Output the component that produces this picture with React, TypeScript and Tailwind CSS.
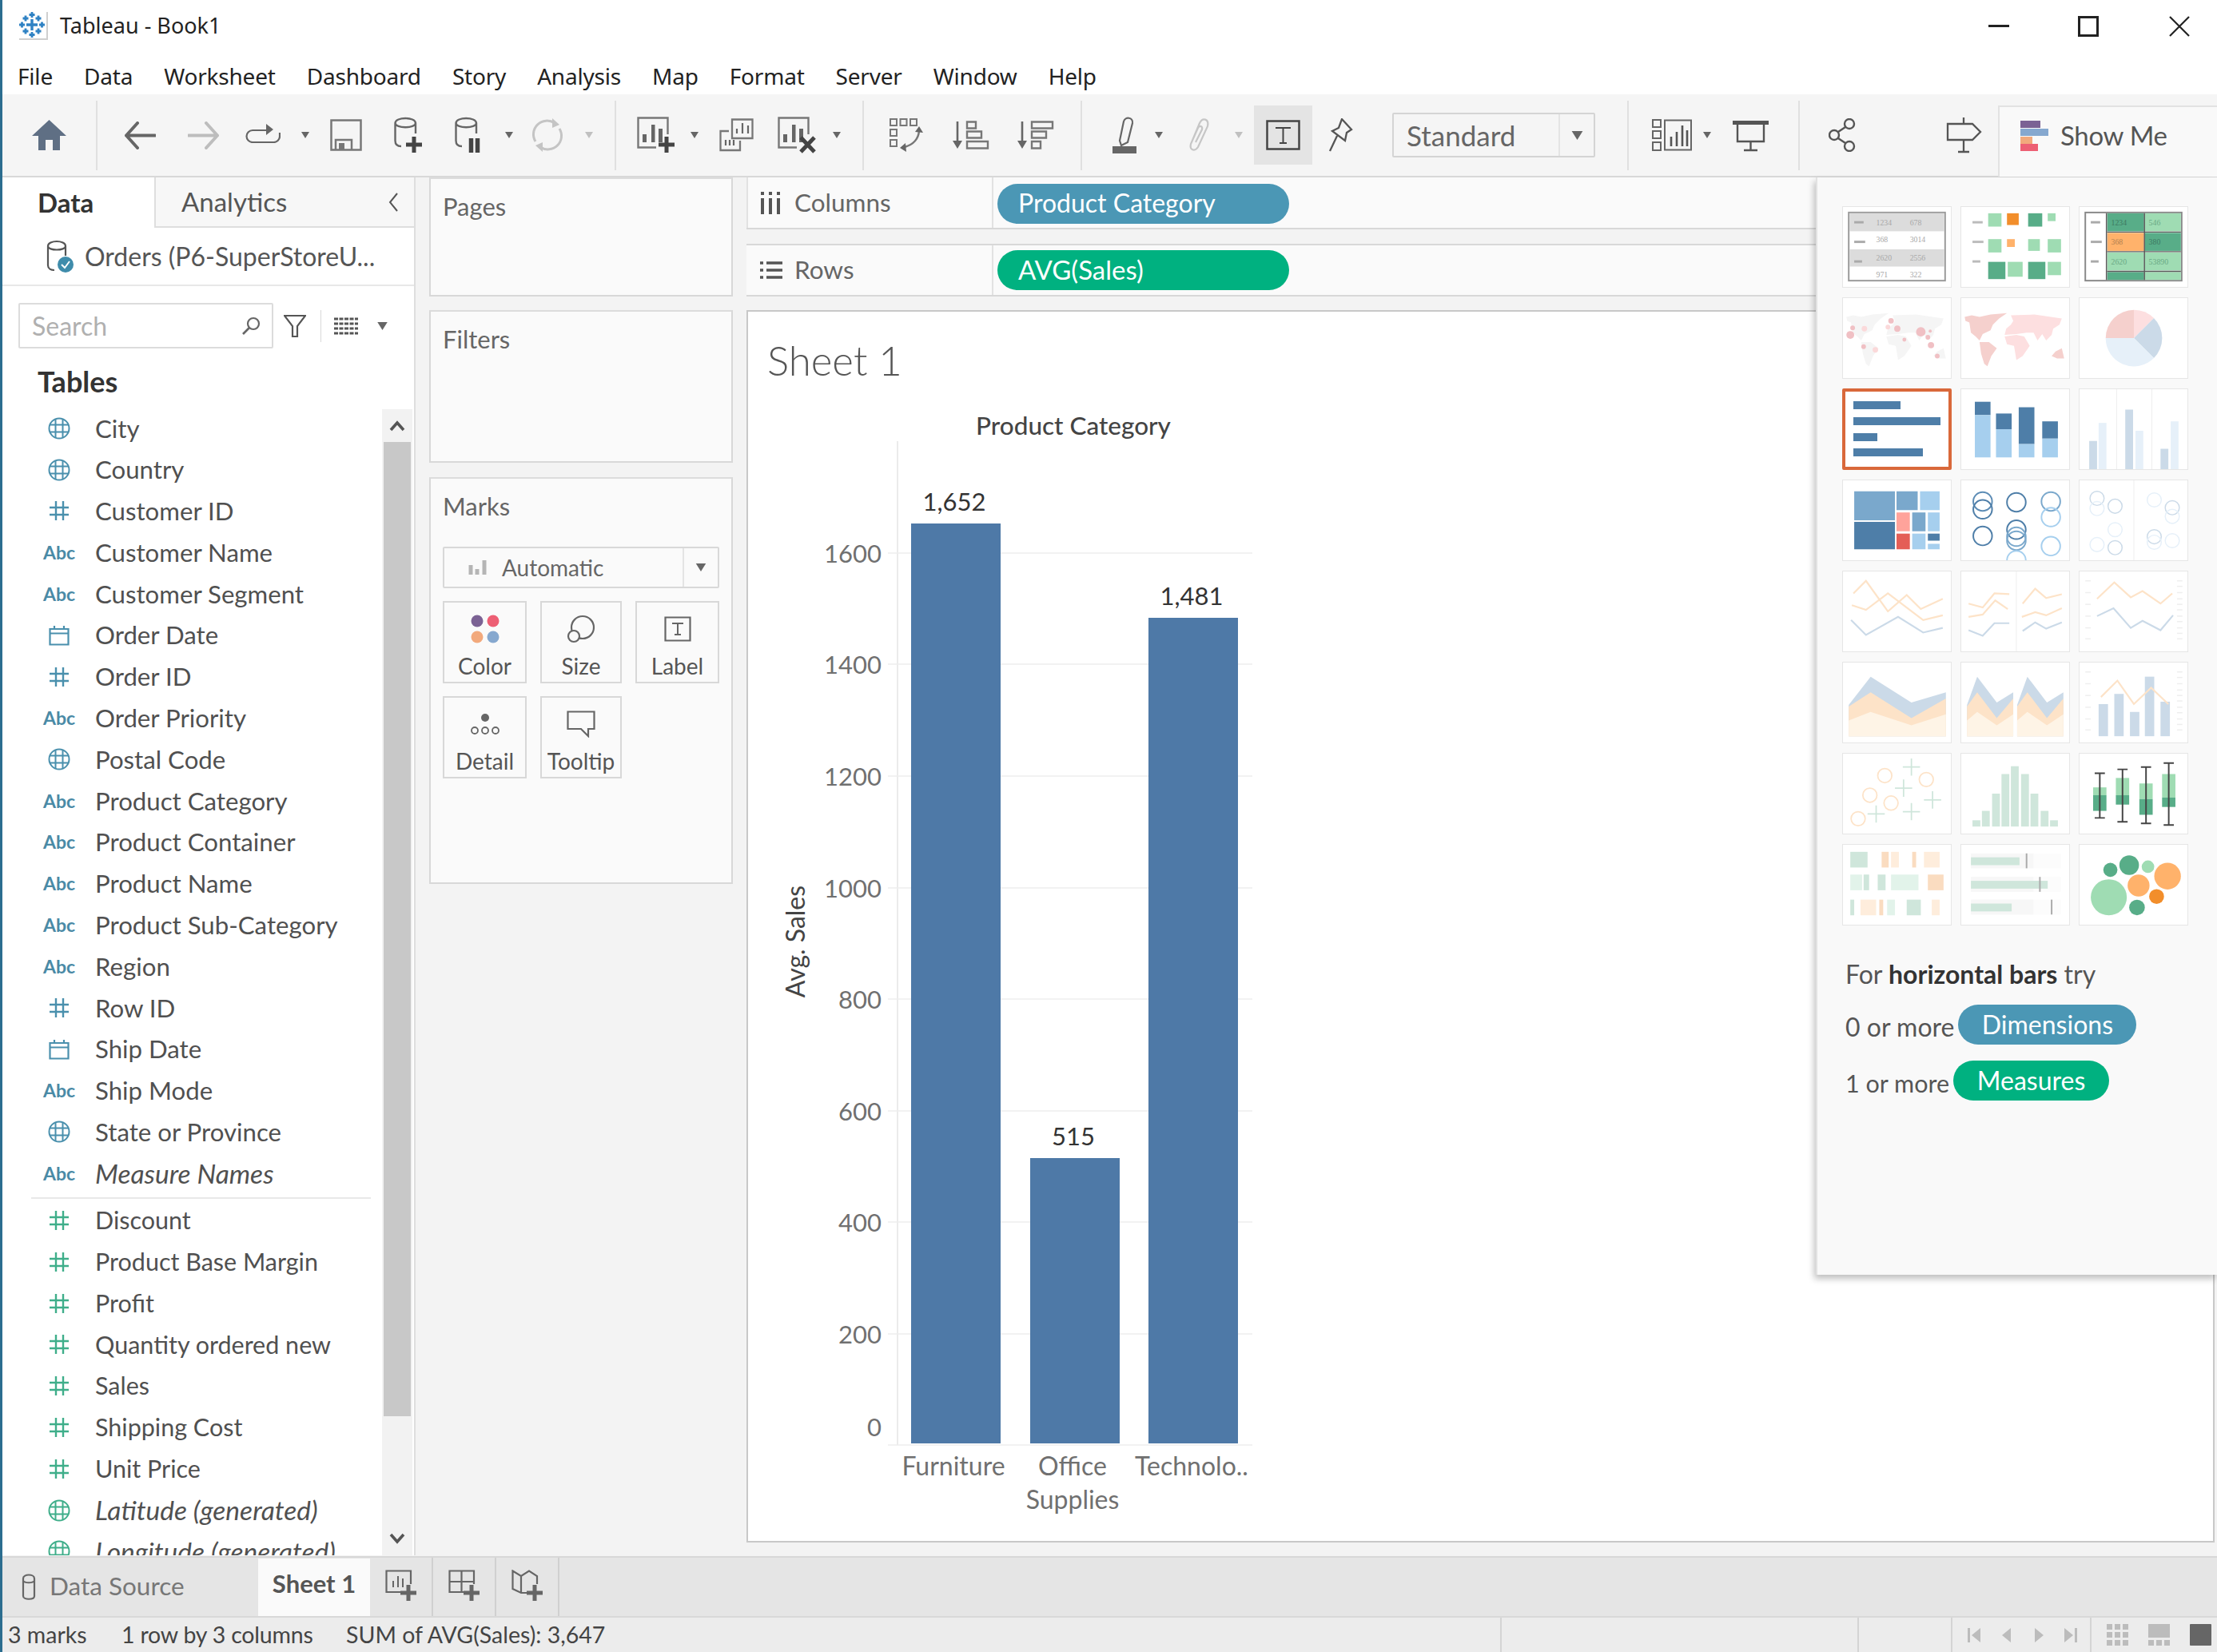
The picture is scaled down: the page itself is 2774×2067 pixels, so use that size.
import type { ReactNode } from "react";

const G = "#666";

type P = { className?: string };

function Caret({ className = "", color = "#666" }: P & { color?: string }) {
  return (
    <svg viewBox="0 0 10 8" className={`w-[12px] h-[8px] shrink-0 ${className}`}>
      <path d="M0 0H10L5 8Z" fill={color} />
    </svg>
  );
}

function Sep({ className = "" }: P) {
  return <div className={`w-[2px] h-[87px] bg-[#e0e0e0] shrink-0 ${className}`} />;
}

function Cylinder({ c = G }: { c?: string }) {
  return (
    <g fill="none" stroke={c} strokeWidth="2.4">
      <path d="M1.5 8C1.5 0 27 0 27 8V21M1.5 8C1.5 15 27 15 27 8M1.5 8V30C1.5 35 5 37 9 37" />
    </g>
  );
}

function Bars({ c = G }: { c?: string }) {
  return (
    <g fill={c}>
      <rect x="7" y="22" width="5" height="10" />
      <rect x="18" y="10" width="4.5" height="22" />
      <rect x="27" y="15" width="5" height="17" />
    </g>
  );
}

function Plus({ x, y, c = "#444" }: { x: number; y: number; c?: string }) {
  return <path d={`M${x - 10} ${y}H${x + 10}M${x} ${y - 10}V${y + 10}`} stroke={c} strokeWidth="5" fill="none" />;
}

function TypeIcon({ type, green }: { type: string; green?: boolean }) {
  const c = green ? "#3fae8a" : "#4a90ad";
  if (type === "abc") {
    return <span className="text-[#4a8aa6] text-[23px] font-bold leading-none">Abc</span>;
  }
  if (type === "hash") {
    return (
      <svg viewBox="0 0 26 26" className="w-[26px] h-[26px]">
        <path d="M9 1V25M18 1V25M1 9H25M1 18H25" stroke={c} strokeWidth="2.4" fill="none" />
      </svg>
    );
  }
  if (type === "date") {
    return (
      <svg viewBox="0 0 26 26" className="w-[26px] h-[26px]">
        <path d="M1.5 5H24.5V24.5H1.5ZM1.5 10.5H24.5M7 1V6M19 1V6" stroke={c} strokeWidth="2.2" fill="none" />
      </svg>
    );
  }
  return (
    <svg viewBox="0 0 28 28" className="w-[28px] h-[28px]">
      <g stroke={c} strokeWidth="2" fill="none">
        <circle cx="14" cy="14" r="12.5" />
        <path d="M9.5 2.5V25.5M18.5 2.5V25.5M2 9.5H26M2 18.5H26" />
      </g>
    </svg>
  );
}

function Field({ name, type, green, italic }: { name: string; type: string; green?: boolean; italic?: boolean }) {
  const size = italic ? "text-[33.5px] italic" : green ? "text-[30.5px]" : "text-[31.2px]";
  return (
    <div className="h-[51.8px] flex items-center shrink-0">
      <div className="w-[90px] ml-[26px] flex justify-center shrink-0">
        <TypeIcon type={type} green={green} />
      </div>
      <span className={`text-[#505050] whitespace-nowrap ${size}`}>{name}</span>
    </div>
  );
}

function MarkCard({ label, children }: { label: string; children: ReactNode }) {
  return (
    <div className="h-[103px] border-2 border-[#d8d8d8] flex flex-col items-center pt-[14px]">
      <div className="h-[38px] flex items-center">{children}</div>
      <span className="text-[28px] leading-[34px] text-[#555] mt-[10px]">{label}</span>
    </div>
  );
}

const Panel = ({ className = "", title, children }: P & { title: string; children?: ReactNode }) => (
  <div className={`border-2 border-[#d8d8d8] border-t-[#dcdcdc] bg-[#fafafa] px-[15px] shrink-0 ${className}`}>
    <div className="text-[31px] text-[#666] leading-[36px] mt-[16px]">{title}</div>
    {children}
  </div>
);

const dim = [
  ["City", "geo"], ["Country", "geo"], ["Customer ID", "hash"], ["Customer Name", "abc"], ["Customer Segment", "abc"],
  ["Order Date", "date"], ["Order ID", "hash"], ["Order Priority", "abc"], ["Postal Code", "geo"], ["Product Category", "abc"],
  ["Product Container", "abc"], ["Product Name", "abc"], ["Product Sub-Category", "abc"], ["Region", "abc"], ["Row ID", "hash"],
  ["Ship Date", "date"], ["Ship Mode", "abc"], ["State or Province", "geo"],
];

const measures = ["Discount", "Product Base Margin", "Profit", "Quantity ordered new", "Sales", "Shipping Cost", "Unit Price"];

const DK = "#58ad88";
const LG = "#9fdcb3";
const OR = "#ffb26b";
const BD = "#4e7ea8";
const BL = "#a6cfee";
const FB = "#cbdae8";
const FL = "#e6f0f9";
const FO = "#fde3c8";

function Ticks() {
  return (
    <g stroke="#eeeeee" strokeWidth="1.5">
      {[12, 27, 42, 57, 72, 86].map((y) => <path key={y} d={`M7 ${y}h7`} />)}
      {[12, 19, 27, 35, 42, 49, 57, 64, 72, 79, 86].map((y) => <path key={y} d={`M124 ${y}h7`} />)}
    </g>
  );
}

function Num({ x, y, t, c = "#a8a8a8" }: { x: number; y: number; t: string; c?: string }) {
  return <text x={x} y={y} fontSize="10" fill={c} fontFamily="Liberation Serif, serif">{t}</text>;
}

function Rect({ r, f }: { r: number[]; f: string }) {
  return <rect x={r[0]} y={r[1]} width={r[2]} height={r[3]} fill={f} />;
}

function MapShape({ a, b }: { a: string; b: string }) {
  return (
    <g>
      <path d="M4 24L13 22L23 24L37 21L58 19L48 26L40 34L37 41L27 46L23 54L18 49L12 44L10 31L5 29Z" fill={a} />
      <path d="M23 56L35 56L45 64L38 74L33 87L29 84L25 71Z" fill={a} />
      <path d="M63 22L93 21L128 26L125 34L117 39L115 47L108 54L103 46L97 54L92 44L83 44L70 46L55 47L57 39L63 34L66 29Z" fill={b} />
      <path d="M55 49L70 47L80 49L87 61L78 74L70 79L67 61L58 59Z" fill={b} />
      <path d="M115 74L120 68L128 64L131 77L122 77Z" fill={a} />
    </g>
  );
}

const thumbs: ReactNode[] = [
  <g key="table">
    <rect x="7" y="7" width="123" height="87" fill="#fff" stroke="#999" strokeWidth="2" />
    <Rect r={[8, 8, 121, 23]} f="#dcdcdc" />
    <Rect r={[8, 54, 121, 22]} f="#dcdcdc" />
    {[[14, 18, 12], [14, 43, 14], [14, 68, 10]].map((d) => <Rect key={d[1]} r={[d[0], d[1], d[2], 3]} f="#aaa" />)}
    <Num x={42} y={23} t="1234" /><Num x={85} y={23} t="678" />
    <Num x={42} y={45} t="368" /><Num x={85} y={45} t="3014" />
    <Num x={42} y={68} t="2620" /><Num x={85} y={68} t="2556" />
    <Num x={42} y={90} t="971" /><Num x={85} y={90} t="322" />
  </g>,
  <g key="hl">
    {[[14, 18, 13], [14, 43, 14], [14, 68, 10]].map((d) => <Rect key={d[1]} r={[d[0], d[1], d[2], 3]} f="#bbb" />)}
    <Rect r={[34, 8, 17, 17]} f={LG} /><Rect r={[58, 8, 15, 15]} f="#f28e2b" /><Rect r={[85, 8, 18, 17]} f={DK} /><Rect r={[110, 8, 10, 10]} f={LG} />
    <Rect r={[34, 41, 17, 17]} f={LG} /><Rect r={[58, 41, 10, 10]} f={OR} /><Rect r={[85, 41, 15, 15]} f={LG} /><Rect r={[110, 41, 17, 17]} f={LG} />
    <Rect r={[34, 70, 22, 22]} f={DK} /><Rect r={[59, 70, 19, 19]} f={LG} /><Rect r={[85, 70, 22, 22]} f={DK} /><Rect r={[110, 70, 17, 17]} f={LG} />
  </g>,
  <g key="heat">
    <rect x="7" y="7" width="123" height="87" fill="#fff" stroke="#888" strokeWidth="2" />
    <Rect r={[35, 8, 47, 23]} f={DK} /><Rect r={[83, 8, 46, 23]} f={LG} />
    <Rect r={[35, 33, 47, 23]} f={OR} /><Rect r={[83, 33, 46, 23]} f={DK} />
    <Rect r={[35, 58, 47, 23]} f={LG} /><Rect r={[83, 58, 46, 23]} f={LG} />
    <Rect r={[35, 83, 47, 10]} f={DK} /><Rect r={[83, 83, 46, 10]} f={LG} />
    <path d="M34 8V93M82.5 8V93M35 32H129M35 57H129M35 82H129" stroke="#5a5a5a" strokeWidth="1.5" />
    {[[14, 18, 12], [14, 43, 14], [14, 68, 10]].map((d) => <Rect key={d[1]} r={[d[0], d[1], d[2], 3]} f="#aaa" />)}
    <Num x={40} y={23} t="1234" c="#3d7a62" /><Num x={88} y={23} t="546" c="#6aa985" />
    <Num x={40} y={48} t="368" c="#b08050" /><Num x={88} y={48} t="380" c="#3d7a62" />
    <Num x={40} y={73} t="2620" c="#6aa985" /><Num x={88} y={73} t="53890" c="#6aa985" />
  </g>,
  <g key="sym">
    <MapShape a="#f5f5f5" b="#f5f5f5" />
    {[[9, 47, 5, "#f0c0c4"], [12, 38, 3, "#f0c0c4"], [27, 39, 3.5, "#fbd9da"], [61, 29, 3.5, "#f0c0c4"], [69, 39, 4, "#f0c0c4"], [57, 37, 3, "#fbd9da"], [99, 43, 6, "#f0c0c4"], [111, 42, 2, "#f0c0c4"], [108, 50, 3, "#f0c0c4"], [78, 53, 2.5, "#f0c0c4"], [112, 60, 4, "#f0c0c4"], [26, 62, 3, "#f0c0c4"], [41, 66, 3.5, "#fbd9da"], [120, 74, 3, "#f0c0c4"]].map((d, i) => (
      <circle key={i} cx={d[0] as number} cy={d[1] as number} r={d[2] as number} fill={d[3] as string} />
    ))}
  </g>,
  <g key="fill"><MapShape a="#f5d0cd" b="#fddfe0" /></g>,
  <g key="pie">
    <path d="M69 51L33 51A36 36 0 0 1 69 15Z" fill="#f5d0cd" />
    <path d="M69 51L69 15A36 36 0 0 1 94.5 25.5Z" fill="#fddfe0" />
    <path d="M69 51L94.5 25.5A36 36 0 0 1 94.5 76.5Z" fill={FB} />
    <path d="M69 51L94.5 76.5A36 36 0 0 1 33 51Z" fill={FL} />
  </g>,
  <g key="hbar">
    <Rect r={[14, 16, 59, 10]} f={BD} /><Rect r={[14, 36, 109, 10]} f={BD} /><Rect r={[14, 56, 30, 10]} f={BD} /><Rect r={[14, 75, 87, 10]} f={BD} />
  </g>,
  <g key="stack">
    <Rect r={[17, 16, 20, 17]} f={BD} /><Rect r={[17, 33, 20, 54]} f={BL} />
    <Rect r={[44, 31, 20, 20]} f={BD} /><Rect r={[44, 51, 20, 36]} f={BL} />
    <Rect r={[73, 23, 20, 47]} f={BD} /><Rect r={[73, 70, 20, 17]} f={BL} />
    <Rect r={[103, 41, 20, 22]} f={BD} /><Rect r={[103, 63, 20, 24]} f={BL} />
  </g>,
  <g key="side">
    <path d="M47 0V102M92 0V102" stroke="#eee" strokeWidth="1" />
    <Rect r={[12, 66, 10, 36]} f={FB} /><Rect r={[24, 43, 10, 59]} f={FL} />
    <Rect r={[58, 26, 10, 76]} f={FB} /><Rect r={[71, 53, 10, 49]} f={FL} />
    <Rect r={[103, 76, 10, 26]} f={FB} /><Rect r={[116, 41, 10, 61]} f={FL} />
  </g>,
  <g key="tree">
    <Rect r={[14, 14, 52, 37]} f="#7aa8cc" /><Rect r={[68, 14, 27, 24]} f="#7aa8cc" /><Rect r={[98, 14, 25, 24]} f={BL} />
    <Rect r={[14, 53, 52, 35]} f={BD} /><Rect r={[68, 41, 17, 24]} f="#ffa39b" /><Rect r={[88, 41, 17, 24]} f="#7aa8cc" />
    <Rect r={[108, 41, 15, 24]} f={BL} /><Rect r={[68, 68, 17, 20]} f="#e45e56" /><Rect r={[88, 68, 17, 20]} f={BL} />
    <Rect r={[108, 68, 15, 9]} f={BD} /><Rect r={[108, 81, 15, 7]} f={BL} />
  </g>,
  <g key="circ" fill="none" strokeWidth="2">
    {[[27, 27, "#5c8cb5"], [27, 37, BD], [70, 28, BD], [27, 71, BD], [70, 63, BD], [70, 72, "#7aa8cc"], [70, 77, "#7aa8cc"], [114, 27, "#7aa8cc"], [114, 47, BL], [114, 84, BL], [70, 102, BL]].map((d, i) => (
      <circle key={i} cx={d[0] as number} cy={d[1] as number} r="12" stroke={d[2] as string} />
    ))}
  </g>,
  <g key="circ2" fill="none" strokeWidth="1.5">
    <path d="M69 0V102" stroke="#eee" strokeWidth="1" />
    {[[22, 23, FB], [22, 36, FL], [45, 33, FB], [45, 63, FL], [22, 82, FL], [45, 86, FB], [95, 25, FL], [118, 35, FB], [118, 46, FL], [95, 72, FB], [95, 79, FL], [118, 77, FL]].map((d, i) => (
      <circle key={i} cx={d[0] as number} cy={d[1] as number} r="9" stroke={d[2] as string} />
    ))}
  </g>,
  <g key="line" fill="none" strokeWidth="2.2">
    <path d="M13 28L29 12L57 51L81 30L99 48L127 35" stroke={FO} />
    <path d="M11 43L29 49L57 28L102 62L127 56" stroke={FO} />
    <path d="M10 62L29 81L70 58L102 78L127 72" stroke={FB} />
  </g>,
  <g key="line2" fill="none" strokeWidth="2.2">
    <path d="M70 0V102" stroke="#eee" strokeWidth="1" />
    <path d="M9 41L27 46L42 28L61 29" stroke={FO} />
    <path d="M9 58L27 55L43 37L59 48" stroke={FO} />
    <path d="M9 75L27 82L42 66L61 66" stroke={FB} />
    <path d="M78 41L94 22L108 34L128 29" stroke={FO} />
    <path d="M77 58L94 52L108 56L128 47" stroke={FO} />
    <path d="M78 76L94 65L108 73L128 65" stroke={FB} />
  </g>,
  <g key="line3">
    <Ticks />
    <g fill="none" strokeWidth="2.2">
      <path d="M22 35L44 14L65 33L80 25L103 41L118 28" stroke={FO} />
      <path d="M22 57L43 47L65 72L80 63L103 75L119 56" stroke={FB} />
    </g>
  </g>,
  <g key="area">
    <path d="M7 54L35 18L87 51L131 38V94H7Z" fill={FB} />
    <path d="M7 56L35 38L87 71L131 46V94H7Z" fill={FO} />
    <path d="M7 74L35 63L87 80L131 66V94H7Z" fill="#fef4e6" />
  </g>,
  <g key="area2">
    {[0, 64].map((dx) => (
      <g key={dx} transform={`translate(${dx} 0)`}>
        <path d="M7 54L20 18L45 51L66 38V94H7Z" fill={FB} />
        <path d="M7 56L20 38L45 71L66 46V94H7Z" fill={FO} />
        <path d="M7 74L20 63L45 80L66 66V94H7Z" fill="#fef4e6" />
      </g>
    ))}
  </g>,
  <g key="dual">
    <Ticks />
    <Rect r={[24, 53, 12, 41]} f={FB} /><Rect r={[44, 40, 12, 54]} f={FB} /><Rect r={[64, 63, 12, 31]} f={FB} />
    <Rect r={[83, 18, 12, 76]} f={FB} /><Rect r={[103, 50, 12, 44]} f={FB} />
    <path d="M27 44L48 23L69 53L91 32L113 53" fill="none" stroke={FO} strokeWidth="2.2" />
  </g>,
  <g key="scatter" fill="none" strokeWidth="1.8">
    {[[53, 28], [106, 33], [34, 53], [61, 63], [19, 83]].map((d) => <circle key={d[0]} cx={d[0]} cy={d[1]} r="9" stroke={FO} />)}
    {[[87, 17], [77, 44], [114, 59], [42, 77], [87, 74]].map((d) => <path key={d[0]} d={`M${d[0] - 11} ${d[1]}h22M${d[0]} ${d[1] - 11}v22`} stroke="#cfe6db" />)}
  </g>,
  <g key="hist" fill="#cfe6db">
    {[[14, 85], [26, 73], [39, 51], [51, 26], [63, 16], [76, 26], [88, 51], [101, 73], [113, 85]].map((d) => (
      <rect key={d[0]} x={d[0]} y={d[1]} width="10" height={93 - d[1]} />
    ))}
  </g>,
  <g key="box">
    {[[17, 43, 53, 73, 25, 82], [46, 31, 53, 65, 20, 87], [76, 38, 58, 78, 17, 89], [105, 26, 56, 68, 12, 91]].map((b) => (
      <g key={b[0]}>
        <Rect r={[b[0], b[1], 17, b[2] - b[1]]} f={LG} />
        <Rect r={[b[0], b[2], 17, b[3] - b[2]]} f={DK} />
        <path d={`M${b[0] + 2} ${b[4]}h13M${b[0] + 2} ${b[5]}h13M${b[0] + 8.5} ${b[4]}V${b[5]}`} stroke="#444" strokeWidth="2" fill="none" />
      </g>
    ))}
  </g>,
  <g key="gantt">
    <Rect r={[9, 9, 22, 20]} f="#cfe6db" /><Rect r={[49, 9, 9, 20]} f="#fadcc0" /><Rect r={[61, 9, 10, 20]} f="#feeddc" /><Rect r={[88, 9, 5, 20]} f="#fadcc0" /><Rect r={[103, 9, 20, 20]} f="#feeddc" />
    <Rect r={[9, 38, 15, 20]} f="#e2f3ea" /><Rect r={[26, 38, 7, 20]} f="#cfe6db" /><Rect r={[44, 38, 10, 20]} f="#cfe6db" /><Rect r={[61, 38, 35, 20]} f="#e2f3ea" /><Rect r={[108, 38, 20, 20]} f="#fadcc0" />
    <Rect r={[9, 70, 5, 20]} f="#cfe6db" /><Rect r={[22, 70, 20, 20]} f="#feeddc" /><Rect r={[46, 70, 5, 20]} f="#fadcc0" /><Rect r={[56, 70, 10, 20]} f="#e2f3ea" /><Rect r={[81, 70, 18, 20]} f="#cfe6db" /><Rect r={[113, 70, 10, 20]} f="#feeddc" />
  </g>,
  <g key="bullet">
    {[[11, 62, 82], [41, 98, 99], [70, 52, 114]].map((b) => (
      <g key={b[0]}>
        <Rect r={[12, b[0], 115, 19]} f="#fcfcfc" />
        <Rect r={[12, b[0], 80, 19]} f="#f7f7f7" />
        <Rect r={[12, b[0] + 5, b[1], 10]} f="#cfe6db" />
        <Rect r={[b[2], b[0], 2, 19]} f="#aaa" />
      </g>
    ))}
  </g>,
  <g key="bubble">
    <circle cx="37" cy="67" r="23" fill={LG} />
    <circle cx="39" cy="32" r="9" fill={DK} />
    <circle cx="63" cy="26" r="12.5" fill={DK} />
    <circle cx="87" cy="28" r="8" fill={LG} />
    <circle cx="112" cy="40" r="17" fill={OR} />
    <circle cx="75" cy="52" r="14" fill={OR} />
    <circle cx="98" cy="66" r="9.5" fill="#f28e2b" />
    <circle cx="73" cy="80" r="10" fill={DK} />
  </g>,
];

function Chart() {
  const ticks = [[1600, 692], [1400, 831], [1200, 971], [1000, 1111], [800, 1250], [600, 1390], [400, 1529], [200, 1669], [0, 1808]];
  const bars = [[1139, 655, "1,652"], [1288, 1449, "515"], [1436, 773, "1,481"]] as const;
  return (
    <svg viewBox="940 500 700 1400" className="w-[700px] h-[1400px] ml-[5px]" fontFamily="Lato, sans-serif">
      <path d="M1122 552V1808" stroke="#e4e4e4" strokeWidth="1.5" />
      {ticks.map(([v, y]) => <path key={v} d={`M1110 ${y}H1566`} stroke="#eeeeee" strokeWidth="1.5" />)}
      {ticks.map(([v, y]) => (
        <text key={v} x={1102} y={(v === 0 ? 1785 : y) + 12} textAnchor="end" fontSize="31" fill="#707070">{v}</text>
      ))}
      <text x={1342} y={544} textAnchor="middle" fontSize="31.5" fill="#444" fontWeight="500">Product Category</text>
      <text transform="translate(1006 1178) rotate(-90)" textAnchor="middle" fontSize="32" fill="#444">Avg. Sales</text>
      {bars.map(([x, y, t]) => (
        <g key={t}>
          <rect x={x} y={y} width={112} height={1806 - y} fill="#4e79a7" />
          <text x={x + 54} y={y - 16} textAnchor="middle" fontSize="31" fill="#333">{t}</text>
        </g>
      ))}
      <text x={1192} y={1846} textAnchor="middle" fontSize="32" fill="#707070">Furniture</text>
      <text x={1341} y={1846} textAnchor="middle" fontSize="32" fill="#707070">Office</text>
      <text x={1341} y={1888} textAnchor="middle" fontSize="32" fill="#707070">Supplies</text>
      <text x={1490} y={1846} textAnchor="middle" fontSize="32" fill="#707070">Technolo..</text>
    </svg>
  );
}

function Toolbar() {
  return (
    <div className="h-[102px] bg-[#f5f5f5] flex items-center shrink-0 relative">
      <svg viewBox="0 0 43 38" className="w-[43px] h-[38px] ml-[37px] shrink-0">
        <path d="M21.5 0L43 20H35V38H26V25H17V38H8V20H0Z" fill="#5f6f84" />
      </svg>
      <Sep className="ml-[37px]" />
      <svg viewBox="0 0 40 35" className="w-[40px] h-[35px] ml-[33px] shrink-0">
        <path d="M17 2L3 17.5L17 33M3 17.5H39" stroke="#666" strokeWidth="4" strokeLinecap="round" strokeLinejoin="round" fill="none" />
      </svg>
      <svg viewBox="0 0 40 35" className="w-[40px] h-[35px] ml-[40px] shrink-0">
        <path d="M23 2L37 17.5L23 33M37 17.5H1" stroke="#bdbdbd" strokeWidth="4" strokeLinecap="round" strokeLinejoin="round" fill="none" />
      </svg>
      <svg viewBox="0 0 44 24" className="w-[44px] h-[24px] ml-[32px] shrink-0 mb-[4px]">
        <path d="M27 8H9A7.5 7.5 0 0 0 9 23H35A7.5 7.5 0 0 0 43 15V11" stroke="#666" strokeWidth="2.2" fill="none" />
        <path d="M26 0L35 7L26 14Z" fill="#666" />
      </svg>
      <Caret className="ml-[25px]" />
      <svg viewBox="0 0 40 40" className="w-[40px] h-[40px] ml-[25px] shrink-0">
        <path d="M1.5 1.5H38.5V38.5H1.5ZM7 38V26H27V38" stroke="#777" strokeWidth="2.5" fill="none" />
        <rect x="11" y="30" width="7" height="8" fill="#777" />
      </svg>
      <svg viewBox="0 0 36 46" className="w-[36px] h-[46px] ml-[40px] shrink-0">
        <Cylinder /><Plus x={25} y={35} />
      </svg>
      <svg viewBox="0 0 32 46" className="w-[32px] h-[46px] ml-[40px] shrink-0">
        <Cylinder /><path d="M20.5 27V45M28.5 27V45" stroke="#444" strokeWidth="5.5" />
      </svg>
      <Caret className="ml-[30px]" />
      <svg viewBox="0 0 42 44" className="w-[42px] h-[44px] ml-[21px] shrink-0">
        <path d="M6 30A17 17 0 0 1 30 7M36 14A17 17 0 0 1 12 37" stroke="#c4c4c4" strokeWidth="3" fill="none" />
        <path d="M27 1L36 9L27 13ZM15 43L6 35L15 31Z" fill="#c4c4c4" />
      </svg>
      <Caret color="#c0c0c0" className="ml-[25px]" />
      <Sep className="ml-[26px]" />
      <svg viewBox="0 0 48 46" className="w-[48px] h-[46px] ml-[26px] shrink-0">
        <path d="M24 38.5H1.5V1.5H38.5V22" stroke="#777" strokeWidth="2.4" fill="none" />
        <Bars /><Plus x={37} y={35} />
      </svg>
      <Caret className="ml-[18px]" />
      <svg viewBox="0 0 43 42" className="w-[43px] h-[42px] ml-[25px] shrink-0">
        <path d="M16 1.5H41.5V25H16ZM12 16H1.5V40H26V28" stroke="#777" strokeWidth="2.3" fill="none" />
        <path d="M22 19V13M29 19V6M36 19V9M8 34V27M13 34V27M18 34V27" stroke="#666" strokeWidth="2.2" />
      </svg>
      <svg viewBox="0 0 48 46" className="w-[48px] h-[46px] ml-[30px] shrink-0">
        <path d="M24 38.5H1.5V1.5H38.5V22" stroke="#777" strokeWidth="2.4" fill="none" />
        <Bars />
        <path d="M29 26L46 44M46 26L29 44" stroke="#444" strokeWidth="5" />
      </svg>
      <Caret className="ml-[20px]" />
      <Sep className="ml-[26px]" />
      <svg viewBox="0 0 43 42" className="w-[43px] h-[42px] ml-[32px] shrink-0">
        <g fill="none" stroke="#777" strokeWidth="2">
          <path d="M1 1h8v8h-8zM13.5 1h8v8h-8zM26 1h8v8h-8zM1 14h8v8h-8zM1 27h8v8h-8z" />
          <path d="M37 16C36 27 29 33 19 36" strokeWidth="2.5" />
        </g>
        <path d="M32 17L37 10L42 18ZM20 31L13 37L21 42Z" fill="#666" />
      </svg>
      <svg viewBox="0 0 46 36" className="w-[46px] h-[36px] ml-[36px] shrink-0">
        <path d="M6 1V27" stroke="#666" strokeWidth="2.6" /><path d="M0 25H12L6 35Z" fill="#666" />
        <path d="M18 1.5h11v8h-11zM18 13.5h18v8h-18zM18 26h26v8.5h-26z" fill="none" stroke="#777" strokeWidth="2.4" />
      </svg>
      <svg viewBox="0 0 46 36" className="w-[46px] h-[36px] ml-[35px] shrink-0">
        <path d="M6 1V27" stroke="#666" strokeWidth="2.6" /><path d="M0 25H12L6 35Z" fill="#666" />
        <path d="M18 1.5h26v8h-26zM18 13.5h18v8h-18zM18 26h11v8.5h-11z" fill="none" stroke="#777" strokeWidth="2.4" />
      </svg>
      <Sep className="ml-[33px]" />
      <svg viewBox="0 0 31 46" className="w-[31px] h-[46px] ml-[38px] shrink-0">
        <path d="M9 30L14 6C16 -1 26 1 25 8L19 32L11 36Z" stroke="#666" strokeWidth="2.2" fill="none" />
        <path d="M0 37H30V46H0ZM6 37L10 33" fill="#666" />
      </svg>
      <Caret className="ml-[21px]" />
      <svg viewBox="0 0 29 46" className="w-[29px] h-[46px] ml-[29px] shrink-0">
        <path d="M6 32L16 8C20 0 28 3 26 12L14 38C10 44 3 42 5 34L14 14C16 10 20 12 19 16L11 32" stroke="#c6c6c6" strokeWidth="2.2" fill="none" />
      </svg>
      <Caret color="#c0c0c0" className="ml-[30px]" />
      <div className="w-[73px] h-[74px] bg-[#e4e4e4] ml-[13px] flex items-center justify-center shrink-0">
        <svg viewBox="0 0 43 38" className="w-[43px] h-[38px]">
          <path d="M1.5 1.5H41.5V36.5H1.5Z" stroke="#444" strokeWidth="2.5" fill="none" />
          <path d="M12 10H31M21.5 10V29M17 29H26" stroke="#444" strokeWidth="2" fill="none" />
        </svg>
      </div>
      <svg viewBox="0 0 32 42" className="w-[32px] h-[42px] ml-[19px] shrink-0">
        <path d="M18 1L30 14L24 18L22 28L6 16L14 12Z M12 22L3 41" stroke="#555" strokeWidth="2.3" fill="none" />
      </svg>
      <div className="w-[254px] h-[56px] ml-[49px] border-2 border-[#d4d4d4] rounded-[2px] flex items-center shrink-0">
        <span className="text-[35px] text-[#666] ml-[16px] w-[190px]">Standard</span>
        <div className="border-l-2 border-[#e4e4e4] flex-1 h-full flex items-center justify-center">
          <Caret className="w-[15px] h-[11px]" />
        </div>
      </div>
      <Sep className="ml-[40px]" />
      <svg viewBox="0 0 50 40" className="w-[50px] h-[40px] ml-[29px] shrink-0">
        <path d="M1 1h10v9h-10zM1 15h10v9h-10zM1 29h10v10h-10z" stroke="#666" strokeWidth="2" fill="none" />
        <path d="M16 1.5H49V38.5H16Z" stroke="#666" strokeWidth="2" fill="none" />
        <path d="M24 34V22M31 34V16M38 34V8M44 34V14" stroke="#555" strokeWidth="2.6" />
      </svg>
      <Caret className="ml-[13px]" />
      <svg viewBox="0 0 45 42" className="w-[45px] h-[42px] ml-[26px] shrink-0">
        <path d="M6 6H39V29H6ZM22.5 29V40M14 40H31" stroke="#555" strokeWidth="2.4" fill="none" />
        <path d="M0 3H45V8H0Z" fill="#555" />
      </svg>
      <Sep className="ml-[37px]" />
      <svg viewBox="0 0 35 42" className="w-[35px] h-[42px] ml-[36px] shrink-0">
        <g stroke="#555" strokeWidth="2.4" fill="none">
          <circle cx="26" cy="7" r="6" /><circle cx="7" cy="21" r="6" /><circle cx="26" cy="35" r="6" />
          <path d="M12 17L21 11M12 25L21 31" />
        </g>
      </svg>
      <svg viewBox="0 0 45 46" className="w-[45px] h-[46px] ml-[112px] shrink-0">
        <path d="M2 9H33L43 19L33 29H2ZM22 1V9M22 29V44M15 44H29" stroke="#555" strokeWidth="2.3" fill="none" />
      </svg>
      <div className="ml-[20px] flex-1 h-[89px] mt-[13px] pb-[14px] bg-[#f9f9f9] border-t-2 border-l-2 border-[#e2e2e2] flex items-center z-10 -mb-[1px]">
        <svg viewBox="0 0 35 38" className="w-[35px] h-[38px] ml-[26px] shrink-0">
          <path d="M0 0H25V9H0Z" fill="#7b6294" />
          <path d="M0 10H35V19H0Z" fill="#86a8cf" />
          <path d="M0 20H15V29H0Z" fill="#f2a97c" />
          <path d="M0 29H22V38H0Z" fill="#ed5f74" />
        </svg>
        <span className="text-[33px] text-[#555] ml-[15px] tracking-[-0.3px]">Show Me</span>
      </div>
    </div>
  );
}

export default function App() {
  return (
    <div className="w-[2774px] h-[2067px] flex flex-col overflow-hidden bg-[#f3f3f3] border-l-[3px] border-[#2c6d8f] font-['Lato',sans-serif] text-[#555]">
      <div className="h-[65px] bg-white flex items-center shrink-0 font-['Noto_Sans',sans-serif] relative">
        <svg viewBox="0 0 37 36" className="w-[37px] h-[36px] ml-[20px] mt-[-2px] shrink-0">
          <path d="M36 1V35H1" stroke="#cfcfcf" strokeWidth="2" fill="none" />
          <g stroke="#2f82c4" strokeWidth="2.8" fill="none">
            <path d="M17 10V24M10 17H24" strokeWidth="3.4" />
            <path d="M17 1V8M13.5 4.5H20.5M17 26V33M13.5 29.5H20.5M1 17H8M4.5 13.5V20.5M26 17H33M29.5 13.5V20.5" />
            <path d="M9 5.5V12.5M5.5 9H12.5M25 5.5V12.5M21.5 9H28.5M9 21.5V28.5M5.5 25H12.5M25 21.5V28.5M21.5 25H28.5" />
          </g>
        </svg>
        <span className="text-[27px] text-[#222] ml-[15px]">Tableau - Book1</span>
        <div className="flex-1" />
        <div className="w-[26px] h-[3px] bg-[#222] shrink-0" />
        <div className="w-[26px] h-[26px] border-[3px] border-[#222] ml-[86px] shrink-0" />
        <svg viewBox="0 0 26 26" className="w-[26px] h-[26px] ml-[88px] mr-[34px] shrink-0">
          <path d="M1 1L25 25M25 1L1 25" stroke="#222" strokeWidth="2.2" />
        </svg>
      </div>
      <div className="h-[53px] bg-white flex items-center shrink-0 pl-[19px] pt-[6px] gap-x-[39px] text-[28px] text-[#222] font-['Noto_Sans',sans-serif] tracking-[-0.2px]">
        {["File", "Data", "Worksheet", "Dashboard", "Story", "Analysis", "Map", "Format", "Server", "Window", "Help"].map((m) => (
          <span key={m}>{m}</span>
        ))}
      </div>
      <Toolbar />
      <div className="flex-1 min-h-0 flex relative border-t-2 border-[#d8d8d8] pb-[1px]">
        <div className="w-[517px] bg-white border-r-2 border-[#dedede] flex flex-col shrink-0">
          <div className="h-[63px] flex shrink-0">
            <div className="w-[190px] flex items-center pl-[44px] text-[33px] font-bold text-[#333]">Data</div>
            <div className="flex-1 flex items-center pl-[32px] bg-[#f7f7f7] border-b-2 border-l-2 border-[#dedede] text-[33px] text-[#555]">
              <span>Analytics</span>
              <svg viewBox="0 0 12 24" className="w-[12px] h-[24px] ml-[127px]">
                <path d="M11 1L2 12L11 23" stroke="#555" strokeWidth="2" fill="none" />
              </svg>
            </div>
          </div>
          <div className="h-[73px] flex items-center border-b-2 border-[#e8e8e8] shrink-0">
            <svg viewBox="0 0 36 42" className="w-[36px] h-[42px] ml-[55px] shrink-0">
              <path d="M2 8C2 0 24 0 24 8V20M2 8C2 14 24 14 24 8M2 8V32C2 36 6 38 10 38" stroke="#555" strokeWidth="2.2" fill="none" />
              <circle cx="24" cy="31" r="10" fill="#3f8cab" />
              <path d="M19 31L23 35L29 27" stroke="#fff" strokeWidth="2" fill="none" />
            </svg>
            <span className="text-[32px] text-[#555] ml-[12px] whitespace-nowrap">Orders (P6-SuperStoreU...</span>
          </div>
          <div className="h-[92px] flex items-center shrink-0 pt-[7px]">
            <div className="w-[319px] h-[57px] ml-[20px] border-2 border-[#dcdcdc] rounded-[2px] flex items-center shrink-0">
              <span className="text-[32px] text-[#b0b0b0] ml-[15px]">Search</span>
              <svg viewBox="0 0 24 24" className="w-[24px] h-[24px] ml-auto mr-[14px]">
                <circle cx="15" cy="9" r="7" stroke="#666" strokeWidth="2.2" fill="none" />
                <path d="M10 14L2 22" stroke="#666" strokeWidth="2.6" />
              </svg>
            </div>
            <svg viewBox="0 0 28 30" className="w-[28px] h-[30px] ml-[13px] shrink-0">
              <path d="M1 2H27L17 15V28H11V15Z" stroke="#555" strokeWidth="2.2" fill="none" />
            </svg>
            <div className="w-[1px] h-[40px] bg-[#d8d8d8] ml-[18px] shrink-0" />
            <svg viewBox="0 0 30 22" className="w-[30px] h-[22px] ml-[16px] shrink-0">
              <path d="M0 2H30M0 8H30M0 14H30M0 20H30" stroke="#555" strokeWidth="3" strokeDasharray="5 1.5" />
            </svg>
            <Caret className="ml-[22px] w-[17px] h-[10px]" />
          </div>
          <div className="h-[60px] flex items-center pl-[44px] text-[36px] font-bold text-[#333] shrink-0 pb-[6px]">Tables</div>
          <div className="flex-1 min-h-0 flex">
            <div className="flex-1 min-w-0 flex flex-col overflow-hidden">
              {dim.map(([n, t]) => <Field key={n} name={n} type={t} />)}
              <Field name="Measure Names" type="abc" italic />
              <div className="h-[2px] bg-[#e8e8e8] mt-[4px] ml-[36px] mr-[14px] shrink-0" />
              <div className="h-[1px] shrink-0" />
              {measures.map((n) => <Field key={n} name={n} type="hash" green />)}
              <Field name="Latitude (generated)" type="geo" green italic />
              <Field name="Longitude (generated)" type="geo" green italic />
            </div>
            <div className="w-[38px] mt-[2px] mr-[2px] bg-[#f2f2f2] flex flex-col shrink-0">
              <div className="h-[41px] flex items-center justify-center shrink-0">
                <svg viewBox="0 0 20 14" className="w-[20px] h-[14px]"><path d="M2 12L10 3L18 12" stroke="#555" strokeWidth="3.6" fill="none" /></svg>
              </div>
              <div className="h-[1219px] bg-[#c8c8c8] mx-[2px] shrink-0" />
              <div className="mt-auto h-[42px] flex items-center justify-center">
                <svg viewBox="0 0 20 14" className="w-[20px] h-[14px]"><path d="M2 2L10 11L18 2" stroke="#555" strokeWidth="3.6" fill="none" /></svg>
              </div>
            </div>
          </div>
        </div>

        <div className="w-[380px] ml-[17px] shrink-0 flex flex-col">
          <Panel title="Pages" className="h-[149px]" />
          <Panel title="Filters" className="h-[191px] mt-[17px]" />
          <Panel title="Marks" className="h-[509px] mt-[18px]">
            <div className="h-[52px] mt-[33px] border-2 border-[#d8d8d8] rounded-[2px] flex items-center">
              <svg viewBox="0 0 24 22" className="w-[24px] h-[22px] ml-[30px] shrink-0">
                <path d="M3 8V20M11 13V20M20 2V20" stroke="#b5b5b5" strokeWidth="5" />
              </svg>
              <span className="text-[28px] text-[#666] ml-[18px] flex-1">Automatic</span>
              <div className="w-[44px] h-full border-l-2 border-[#e4e4e4] flex items-center justify-center">
                <Caret className="w-[16px] h-[10px]" />
              </div>
            </div>
            <div className="grid grid-cols-[105px_102px_105px] gap-x-[17px] gap-y-[16px] mt-[16px]">
              <MarkCard label="Color">
                <svg viewBox="0 0 36 36" className="w-[36px] h-[36px]">
                  <circle cx="8" cy="8" r="7.5" fill="#7b6294" /><circle cx="28" cy="8" r="7.5" fill="#ed5f74" />
                  <circle cx="8" cy="28" r="7.5" fill="#f2a97c" /><circle cx="28" cy="28" r="7.5" fill="#86a8cf" />
                </svg>
              </MarkCard>
              <MarkCard label="Size">
                <svg viewBox="0 0 36 36" className="w-[36px] h-[36px]">
                  <circle cx="20" cy="16" r="14" stroke="#666" strokeWidth="2.2" fill="none" />
                  <circle cx="9" cy="27" r="7" stroke="#666" strokeWidth="2.2" fill="#fafafa" />
                </svg>
              </MarkCard>
              <MarkCard label="Label">
                <svg viewBox="0 0 34 32" className="w-[34px] h-[32px]">
                  <path d="M1.5 1.5H32.5V30.5H1.5Z" stroke="#666" strokeWidth="2.2" fill="none" />
                  <path d="M10 9H24M17 9V23M13 23H21" stroke="#666" strokeWidth="2" fill="none" />
                </svg>
              </MarkCard>
              <MarkCard label="Detail">
                <svg viewBox="0 0 36 28" className="w-[36px] h-[28px]">
                  <circle cx="18" cy="6" r="5" fill="#666" />
                  <g stroke="#666" strokeWidth="1.8" fill="none">
                    <circle cx="5" cy="22" r="4" /><circle cx="18" cy="22" r="4" /><circle cx="31" cy="22" r="4" />
                  </g>
                </svg>
              </MarkCard>
              <MarkCard label="Tooltip">
                <svg viewBox="0 0 36 34" className="w-[36px] h-[34px]">
                  <path d="M1.5 1.5H34.5V23H27V32L18 23H1.5Z" stroke="#666" strokeWidth="2.2" fill="none" />
                </svg>
              </MarkCard>
            </div>
          </Panel>
        </div>

        <div className="flex-1 min-w-0 ml-[17px] mr-[3px] flex flex-col pb-[16px]">
          <div className="h-[65px] bg-[#fafafa] border-b-2 border-[#d8d8d8] flex shrink-0">
            <div className="w-[309px] border-r-2 border-[#e2e2e2] border-l-2 flex items-center pl-[15px] shrink-0">
              <svg viewBox="0 0 28 30" className="w-[28px] h-[30px] shrink-0">
                <path d="M3 9V29M13 9V29M23 9V29" stroke="#555" strokeWidth="4" />
                <path d="M1 3H5M11 3H15M21 3H25" stroke="#555" strokeWidth="4" />
              </svg>
              <span className="text-[31.5px] text-[#666] ml-[15px]">Columns</span>
            </div>
            <div className="ml-[5px] mt-[8px] w-[365px] h-[50px] bg-[#4b97b5] rounded-[25px] flex items-center pl-[26px] pb-[2px] text-[32px] text-white">Product Category</div>
          </div>
          <div className="h-[66px] mt-[18px] bg-[#fafafa] border-y-2 border-[#d8d8d8] flex shrink-0">
            <div className="w-[309px] border-r-2 border-[#e2e2e2] flex items-center pl-[17px] shrink-0">
              <svg viewBox="0 0 28 24" className="w-[28px] h-[24px] shrink-0">
                <path d="M0 3H4M8 3H28M0 12H4M8 12H28M0 21H4M8 21H28" stroke="#555" strokeWidth="3.6" />
              </svg>
              <span className="text-[31.5px] text-[#666] ml-[15px]">Rows</span>
            </div>
            <div className="ml-[5px] mt-[6px] w-[365px] h-[50px] bg-[#00b180] rounded-[25px] flex items-center pl-[26px] text-[33px] text-white">AVG(Sales)</div>
          </div>
          <div className="flex-1 min-h-0 mt-[17px] bg-white border-2 border-[#c8c8c8] overflow-hidden">
            <div className="h-[110px] pl-[24px] pt-[31px] text-[51px] leading-[60px] font-light text-[#555]">Sheet 1</div>
            <Chart />
          </div>
        </div>

        <div className="absolute right-0 top-0 w-[502px] h-[1373px] bg-[#f9f9f9] border-l-2 border-[#e2e2e2] shadow-[-2px_5px_8px_rgba(0,0,0,0.25)] pl-[31px] pt-[36px]">
          <div className="grid grid-cols-[137px_137px_137px] gap-x-[11px] gap-y-[12px]">
            {thumbs.map((t, i) => (
              <div key={i} className={`relative h-[102px] bg-white ${i === 6 ? "outline-[4px] outline-[#d9683a] outline-offset-[-4px] rounded-[2px]" : "border border-[#e6e6e6]"}`}>
                <svg viewBox="0 0 137 102" className="w-full h-full overflow-hidden">{t}</svg>
              </div>
            ))}
          </div>
          <div className="text-[32px] text-[#555] mt-[43px] ml-[4px] leading-[36px]">
            For <b className="font-bold text-[#333]">horizontal bars</b> try
          </div>
          <div className="flex items-center ml-[4px] mt-[20px] h-[50px]">
            <span className="text-[32px] text-[#555] leading-[40px] mt-[6px]">0 or more</span>
            <div className="ml-[5px] w-[223px] h-[50px] bg-[#4b97b5] rounded-[25px] text-white text-[32px] flex items-center justify-center">Dimensions</div>
          </div>
          <div className="flex items-center ml-[4px] mt-[20px] h-[50px]">
            <span className="text-[30.5px] text-[#555] leading-[40px] mt-[6px]">1 or more</span>
            <div className="ml-[5px] w-[195px] h-[50px] bg-[#00b180] rounded-[25px] text-white text-[32px] flex items-center justify-center">Measures</div>
          </div>
        </div>
      </div>

      <div className="h-[75px] bg-[#e5e5e5] border-t-2 border-[#d8d8d8] flex shrink-0">
        <svg viewBox="0 0 18 36" className="w-[18px] h-[36px] ml-[24px] mt-[18px] shrink-0">
          <path d="M2 8C2 2 16 2 16 8V30C16 35 2 35 2 30ZM2 11C4 14 14 14 16 11" stroke="#666" strokeWidth="2.2" fill="none" />
        </svg>
        <span className="text-[31.5px] text-[#777] ml-[17px] mt-[12px] whitespace-nowrap w-[264px] shrink-0">Data Source</span>
        <div className="w-[140px] h-[72px] mt-[1px] pb-[10px] bg-[#fafafa] flex items-center justify-center text-[31px] font-bold text-[#555] shrink-0 ml-[-3px]">Sheet 1</div>
        {[
          <g key="a"><path d="M26 28H1.5V1.5H32V18" stroke="#666" strokeWidth="2.2" fill="none" /><path d="M10 22V14M16 22V8M22 22V11" stroke="#666" strokeWidth="2" /></g>,
          <g key="b"><path d="M26 28H1.5V1.5H32V18M1.5 15H32M16.5 1.5V28" stroke="#666" strokeWidth="2.2" fill="none" /></g>,
          <g key="c"><path d="M26 29H12L1.5 24V1.5L12 8L22 1.5L32 8V18M12 8V29" stroke="#666" strokeWidth="2.2" fill="none" /></g>,
        ].map((g, i) => (
          <div key={i} className="w-[79px] pb-[4px] border-r-2 border-[#d0d0d0] flex items-center justify-center shrink-0">
            <svg viewBox="0 0 40 40" className="w-[40px] h-[40px]">
              {g}
              <Plus x={29} y={29} c="#666" />
            </svg>
          </div>
        ))}
      </div>
      <div className="h-[45px] bg-[#ececec] border-t-2 border-[#d8d8d8] flex items-center shrink-0 text-[28.5px] text-[#444]">
        <span className="ml-[7px] w-[142px]">3 marks</span>
        <span className="w-[281px] tracking-[-0.2px]">1 row by 3 columns</span>
        <span className="w-[1444px] whitespace-nowrap">SUM of AVG(Sales): 3,647</span>
        <div className="w-[447px] h-full border-l-2 border-[#d4d4d4] shrink-0" />
        <div className="w-[117px] h-full border-l-2 border-[#d4d4d4] shrink-0" />
        <div className="w-[176px] h-full border-x-2 border-[#d4d4d4] flex items-center shrink-0">
          <svg viewBox="0 0 140 18" className="w-[140px] h-[18px] ml-[19px]">
            <path d="M0 0H3V18H0ZM16 0V18L5 9ZM54 0V18L43 9ZM84 0V18L95 9ZM121 0V18L132 9ZM134 0H137V18H134Z" fill="#bcbcbc" />
          </svg>
        </div>
        <div className="flex items-center ml-[19px] gap-x-[25px]">
          <svg viewBox="0 0 27 27" className="w-[27px] h-[27px]">
            <path d="M0 0h7v7h-7zM10 0h7v7h-7zM20 0h7v7h-7zM0 10h7v7h-7zM10 10h7v7h-7zM20 10h7v7h-7zM0 20h7v7h-7zM10 20h7v7h-7zM20 20h7v7h-7z" fill="#bcbcbc" />
          </svg>
          <svg viewBox="0 0 27 27" className="w-[27px] h-[27px]">
            <path d="M0 0h27v17h-27zM0 20h7v7h-7zM10 20h7v7h-7zM20 20h7v7h-7z" fill="#bcbcbc" />
          </svg>
          <div className="w-[27px] h-[27px] bg-[#666] rounded-[1px]" />
        </div>
      </div>
    </div>
  );
}
